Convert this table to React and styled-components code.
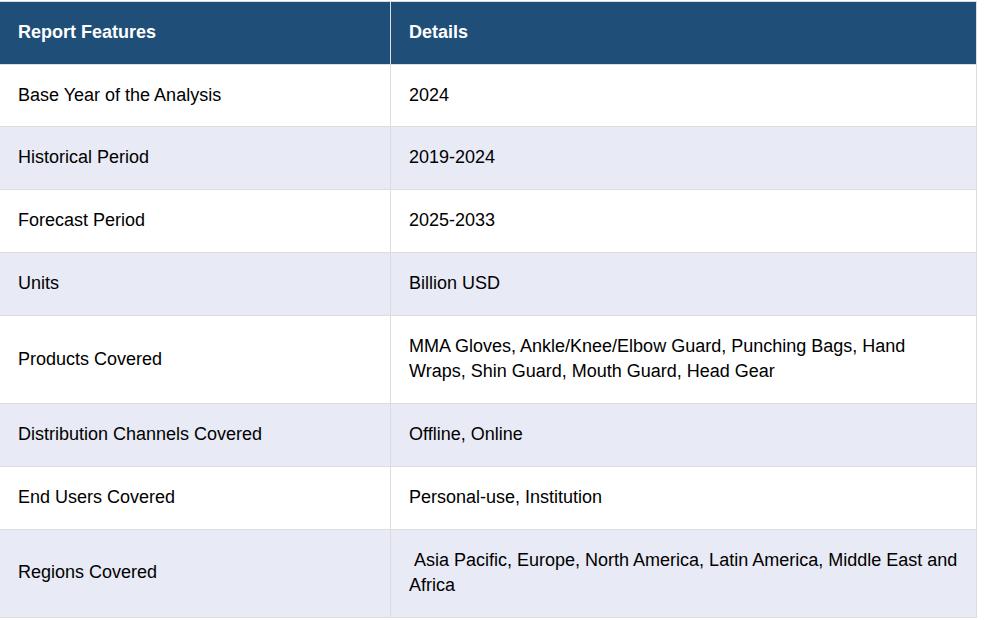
import styled, { createGlobalStyle } from "styled-components";

const GlobalStyle = createGlobalStyle`
    body {
        margin: 0;
        background: #ffffff;
        font-family: "Liberation Sans", Arial, sans-serif;
    }
    `

const Page = styled.div`
    padding-top: 1px;
    margin-left: -1px;
    `

const Table = styled.table`
    width: 978px;
    border-collapse: collapse;
    font-size: 18px;
    line-height: 1.43;
    color: #000;
    `

const HeadCell = styled.th`
    background: #1f4e79;
    color: #fff;
    font-weight: bold;
    text-align: left;
    padding: 18px 18px;
    border: 1px solid #dddddd;
    width: ${(p) => p.$w || "auto"};
    `

const Row = styled.tr`
    background: ${(p) => (p.$alt ? "#e8eaf5" : "#ffffff")};
    `

const Cell = styled.td`
    padding: 18px 18px;
    border: 1px solid #dddddd;
    vertical-align: middle;
    `

const rows = [
    ["Base Year of the Analysis", "2024"],
    ["Historical Period", "2019-2024"],
    ["Forecast Period", "2025-2033"],
    ["Units", "Billion USD"],
    ["Products Covered", "MMA Gloves, Ankle/Knee/Elbow Guard, Punching Bags, Hand Wraps, Shin Guard, Mouth Guard, Head Gear"],
    ["Distribution Channels Covered", "Offline, Online"],
    ["End Users Covered", "Personal-use, Institution"],
    ["Regions Covered", "\u00a0Asia Pacific, Europe, North America, Latin America, Middle East and Africa"],
]

const App = () => (
    <Page>
        <GlobalStyle />
        <Table>
            <thead>
                <tr>
                    <HeadCell $w="354px">Report Features</HeadCell>
                    <HeadCell>Details</HeadCell>
                </tr>
            </thead>
            <tbody>
                {rows.map(([k, v], i) => (
                    <Row key={k} $alt={i % 2 === 1}>
                        <Cell>{k}</Cell>
                        <Cell>{v}</Cell>
                    </Row>
                ))}
            </tbody>
        </Table>
    </Page>
)

export default App
